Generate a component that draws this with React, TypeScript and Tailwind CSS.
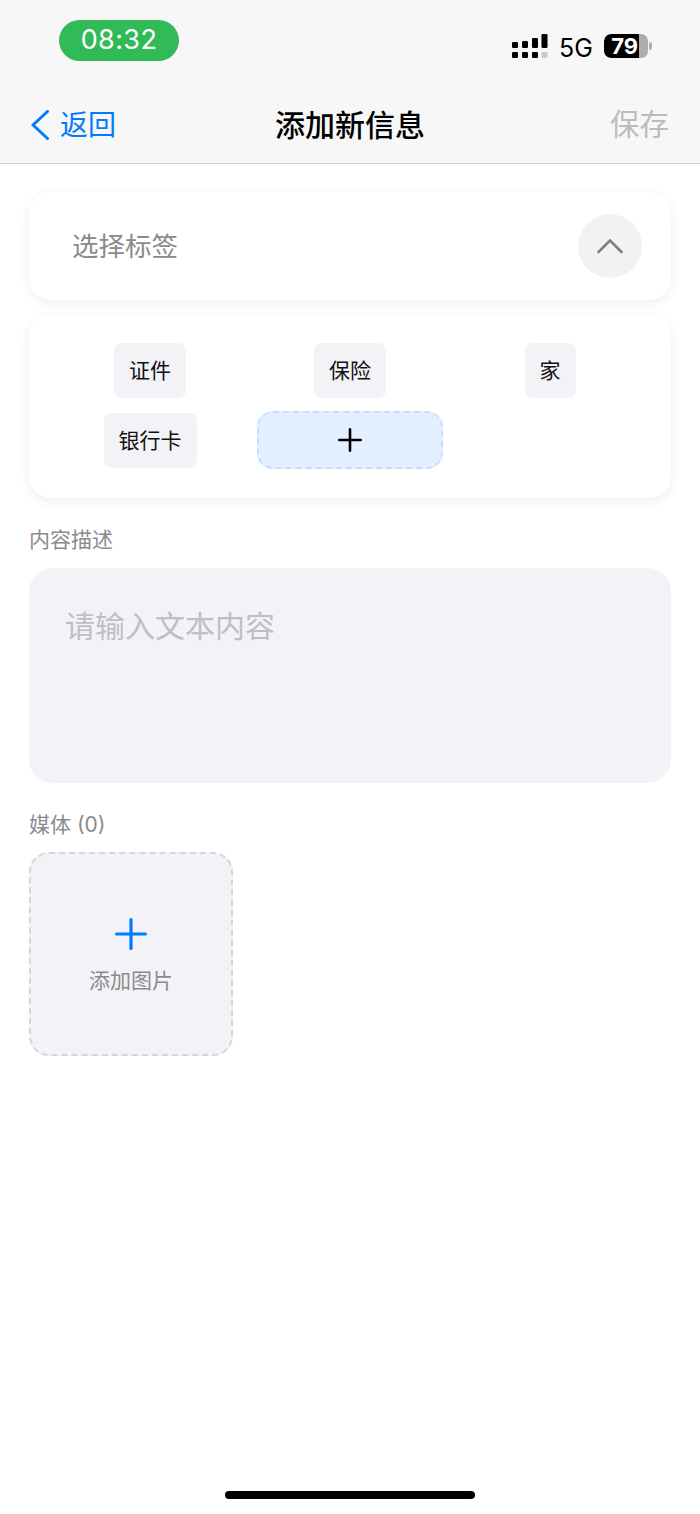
const cjk = "font-['Inter','Noto_Sans_CJK_SC',sans-serif]";

const tags = ["证件", "保险", "家", "银行卡"];

const SignalIcon = () => (
  <svg width="36" height="24" viewBox="0 0 36 24" className="block">
    <rect x="0" y="8" width="6" height="6" rx="1.3" fill="#000" />
    <rect x="0" y="18" width="6" height="6" rx="1.3" fill="#000" />
    <rect x="10" y="7" width="6" height="7" rx="1.3" fill="#000" />
    <rect x="10" y="18" width="6" height="6" rx="1.3" fill="#000" />
    <rect x="20" y="4" width="6" height="10" rx="1.3" fill="#000" />
    <rect x="20" y="18" width="6" height="6" rx="1.3" fill="#000" />
    <rect x="29.5" y="0" width="6" height="14" rx="1.3" fill="#000" />
    <rect x="29.5" y="18" width="6" height="6" rx="1.3" fill="#c8c8c8" />
  </svg>
);

const PlusIcon = ({ size, width, color }: { size: number; width: number; color: string }) => (
  <svg width={size} height={size} viewBox={`0 0 ${size} ${size}`} className="block">
    <path
      d={`M${size / 2} ${width / 2}V${size - width / 2}M${width / 2} ${size / 2}H${size - width / 2}`}
      stroke={color}
      strokeWidth={width}
      strokeLinecap="round"
      fill="none"
    />
  </svg>
);

export default function App() {
  return (
    <div className={`flex h-[1514px] w-[700px] flex-col overflow-hidden bg-white ${cjk}`}>
      {/* Status bar + nav */}
      <div className="h-[164px] border-b border-[#d4d4d6] bg-[#f7f7f7]">
        <div className="flex h-[88px] items-start justify-between pl-[59px] pr-[48px]">
          <div className="mt-[20px] flex h-[41px] w-[120px] items-center justify-center rounded-full bg-[#30bb58] text-[27px] tracking-[0.4px] text-white">
            08:32
          </div>
          <div className="mt-[34px] flex items-start">
            <SignalIcon />
            <span className="ml-[11px] mt-[2px] w-[32px] text-[25px] leading-[24px] text-black">5G</span>
            <div className="relative ml-[13px] flex h-[24px] w-[44px] items-center overflow-hidden rounded-[7px] bg-[#adadad]">
              <div className="flex h-full w-[35px] items-center justify-end rounded-l-[7px] bg-black pr-[1px] text-[22px] font-bold leading-none text-white">
                79
              </div>
            </div>
            <div className="ml-[1px] mt-[8px] h-[8px] w-[3px] rounded-r-full bg-[#adadad]" />
          </div>
        </div>
        <div className="grid h-[72px] grid-cols-3 items-center px-[31px] pt-[2px]">
          <div className="flex items-center">
            <svg width="18" height="30" viewBox="0 0 18 30" className="block">
              <path d="M16.5 1.5L2 15l14.5 13.5" stroke="#007aff" strokeWidth="3" strokeLinecap="round" strokeLinejoin="round" fill="none" />
            </svg>
            <span className="ml-[11px] text-[28px] leading-none text-[#007aff]">返回</span>
          </div>
          <div className="whitespace-nowrap text-center text-[30px] font-medium leading-none text-black">添加新信息</div>
          <div className="text-right text-[29.5px] leading-none text-[#bcbcbc]">保存</div>
        </div>
      </div>

      <div className="flex flex-col px-[29px] pt-[28px]">
        {/* Tag selector */}
        <div className="flex h-[108px] items-center justify-between rounded-[22px] bg-white pl-[43px] pr-[29px] shadow-[0_3px_12px_rgba(0,0,0,0.07)]">
          <span className="pt-[1px] text-[26.5px] leading-none text-[#8a8a8e]">选择标签</span>
          <div className="flex h-[64px] w-[64px] items-center justify-center rounded-full bg-[#f2f2f2]">
            <svg width="26" height="16" viewBox="0 0 26 16" className="block">
              <path d="M1.5 14L13 2.5 24.5 14" stroke="#808080" strokeWidth="2.6" strokeLinecap="round" strokeLinejoin="round" fill="none" />
            </svg>
          </div>
        </div>

        <div className="mt-[14px] grid grid-cols-3 items-center justify-items-center gap-y-[13px] rounded-[22px] bg-white px-[21px] pb-[29px] pt-[29px] shadow-[0_3px_12px_rgba(0,0,0,0.07)]">
          {tags.map((t) => (
            <div key={t} className="flex h-[55px] items-center rounded-[8px] bg-[#f2f2f7] px-[15px] text-[21px] leading-none text-[#111]">
              {t}
            </div>
          ))}
          <div className="flex h-[58px] w-[186px] items-center justify-center rounded-[16px] border-2 border-dashed border-[#c2defd] bg-[#e4f0ff]">
            <PlusIcon size={24} width={2.6} color="#000" />
          </div>
        </div>

        {/* Description */}
        <div className="mt-[28px] text-[21px] leading-[28px] text-[#8a8a8e]">内容描述</div>
        <div className="mt-[14px] h-[215px] rounded-[24px] bg-[#f2f2f7] px-[36px] pt-[40px] text-[30px] leading-[36px] text-[#bfbfc3]">
          请输入文本内容
        </div>

        {/* Media */}
        <div className="mt-[28px] text-[21px] leading-[28px] text-[#8a8a8e]">媒体 (0)</div>
        <div className="mt-[13px] flex h-[204px] w-[204px] flex-col items-center rounded-[20px] border-2 border-dashed border-[#d6d6da] bg-[#f2f2f7] pt-[64px]">
          <PlusIcon size={32} width={3.2} color="#007aff" />
          <span className="mt-[17px] text-[21px] leading-[28px] text-[#8a8a8e]">添加图片</span>
        </div>
      </div>

      {/* Home indicator */}
      <div className="mt-auto flex justify-center pb-[15px]">
        <div className="h-[8px] w-[250px] rounded-full bg-black" />
      </div>
    </div>
  );
}
